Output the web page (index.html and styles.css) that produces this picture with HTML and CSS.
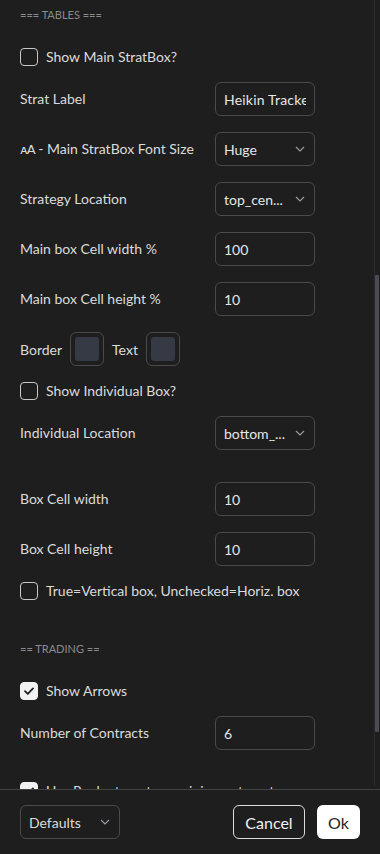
FILE: index.html
```html
<!DOCTYPE html>
<html>
<head>
<meta charset="utf-8">
<link rel="stylesheet" href="styles.css">
</head>
<body>
<div class="dialog">
  <div class="scroll">
    <div class="content">
      <div class="group-title first">=== TABLES ===</div>
      <label class="check-row"><span class="box"></span><span class="check-label">Show Main StratBox?</span></label>
      <div class="row"><span class="label">Strat Label</span><div class="input"><span class="val clip">Heikin Tracker</span></div></div>
      <div class="row"><span class="label"><span class="aa">ᴀA</span> - Main StratBox Font Size</span><div class="input select"><span class="val">Huge</span><svg class="chev" width="10" height="6" viewBox="0 0 10 6"><path d="M1 1l4 4 4-4" fill="none" stroke="#9a9ca3" stroke-width="1.1"/></svg></div></div>
      <div class="row"><span class="label">Strategy Location</span><div class="input select"><span class="val">top_cen...</span><svg class="chev" width="10" height="6" viewBox="0 0 10 6"><path d="M1 1l4 4 4-4" fill="none" stroke="#9a9ca3" stroke-width="1.1"/></svg></div></div>
      <div class="row"><span class="label">Main box Cell width %</span><div class="input">100</div></div>
      <div class="row"><span class="label">Main box Cell height %</span><div class="input">10</div></div>
      <div class="swatch-row"><span class="label-inline">Border</span><span class="swatch"><span class="swatch-fill"></span></span><span class="label-inline">Text</span><span class="swatch"><span class="swatch-fill"></span></span></div>
      <label class="check-row"><span class="box"></span><span class="check-label">Show Individual Box?</span></label>
      <div class="row"><span class="label">Individual Location</span><div class="input select"><span class="val">bottom_...</span><svg class="chev" width="10" height="6" viewBox="0 0 10 6"><path d="M1 1l4 4 4-4" fill="none" stroke="#9a9ca3" stroke-width="1.1"/></svg></div></div>
      <div class="row spaced"><span class="label">Box Cell width</span><div class="input">10</div></div>
      <div class="row"><span class="label">Box Cell height</span><div class="input">10</div></div>
      <label class="check-row"><span class="box"></span><span class="check-label">True=Vertical box, Unchecked=Horiz. box</span></label>
      <div class="group-title">== TRADING ==</div>
      <label class="check-row"><span class="box checked"><svg width="18" height="18" viewBox="0 0 18 18"><path d="M5 9.2l2.8 2.6 5.2-5.4" fill="none" stroke="#1e1e1e" stroke-width="1.8" stroke-linecap="round" stroke-linejoin="round"/></svg></span><span class="check-label">Show Arrows</span></label>
      <div class="row"><span class="label">Number of Contracts</span><div class="input">6</div></div>
      <label class="check-row spaced"><span class="box checked"><svg width="18" height="18" viewBox="0 0 18 18"><path d="M5 9.2l2.8 2.6 5.2-5.4" fill="none" stroke="#1e1e1e" stroke-width="1.8" stroke-linecap="round" stroke-linejoin="round"/></svg></span><span class="check-label">Use Renko targets as minimum target</span></label>
    </div>
    <div class="scrollbar"><div class="thumb"></div></div>
  </div>
  <div class="footer">
    <div class="input select defaults"><span class="val">Defaults</span><svg class="chev" width="10" height="6" viewBox="0 0 10 6"><path d="M1 1l4 4 4-4" fill="none" stroke="#9a9ca3" stroke-width="1.1"/></svg></div>
    <div class="buttons">
      <div class="btn cancel">Cancel</div>
      <div class="btn ok">Ok</div>
    </div>
  </div>
</div>
</body>
</html>
```
FILE: styles.css
```css
html, body {
  margin: 0;
  padding: 0;
  background: #1e1e1e;
}
body {
  font-family: "Trebuchet MS", Lato, "Liberation Sans", sans-serif;
  font-size: 14px;
  color: #dbdbdb;
}
.dialog {
  width: 380px;
  height: 854px;
  display: flex;
  flex-direction: column;
}
.scroll {
  height: 789px;
  overflow: hidden;
  display: flex;
}
.content {
  flex: 1;
  display: flex;
  flex-direction: column;
  gap: 16px;
  padding: 7px 0 0 20px;
}
.group-title {
  font-size: 11px;
  line-height: 16px;
  height: 16px;
  color: #8a8a8a;
  margin-top: 25px;
  margin-bottom: 9px;
}
.group-title.first {
  margin-top: 0;
}
.check-row {
  display: flex;
  align-items: center;
  gap: 8px;
  height: 18px;
  flex-shrink: 0;
}
.box {
  width: 18px;
  height: 18px;
  box-sizing: border-box;
  border: 1px solid #c8c8c8;
  border-radius: 4px;
  flex-shrink: 0;
  display: flex;
}
.box.checked {
  background: #f2f2f2;
  border-color: #f2f2f2;
}
.box.checked svg {
  margin: -1px;
}
.check-label {
  line-height: 18px;
  white-space: nowrap;
}
.row {
  display: grid;
  grid-template-columns: 195px 100px;
  align-items: center;
  height: 34px;
  flex-shrink: 0;
}
.spaced {
  margin-top: 16px;
}
.label {
  white-space: nowrap;
  margin-top: -1px;
}
.aa {
  font-family: "DejaVu Sans", sans-serif;
  font-size: 13px;
  letter-spacing: -1px;
}
.input {
  box-sizing: border-box;
  height: 34px;
  border: 1px solid #4a4a4a;
  border-radius: 6px;
  padding: 0 8px;
  display: flex;
  align-items: center;
  color: #e6e6e6;
  overflow: hidden;
  white-space: nowrap;
}
.val {
  overflow: hidden;
  min-width: 0;
}
.clip {
  flex: 1;
  letter-spacing: 0.2px;
}
.select {
  justify-content: space-between;
  padding-right: 9px;
}
.chev {
  flex-shrink: 0;
}
.swatch-row {
  display: flex;
  align-items: center;
  gap: 8px;
  height: 34px;
  flex-shrink: 0;
}
.swatch {
  box-sizing: border-box;
  width: 34px;
  height: 34px;
  border: 1px solid #4a4a4a;
  border-radius: 6px;
  padding: 4px;
  display: flex;
}
.swatch-fill {
  flex: 1;
  background: #363a45;
  border-radius: 3px;
}
.scrollbar {
  width: 5px;
  margin-right: 1px;
  border-left: 1px solid #2b2b2e;
  display: flex;
  flex-direction: column;
  padding-top: 275px;
  box-sizing: border-box;
  height: 786px;
}
.thumb {
  width: 4px;
  height: 457px;
  background: #4a4b55;
  border-radius: 1px;
}
.footer {
  border-top: 1px solid #434343;
  flex: 1;
  display: flex;
  align-items: center;
  justify-content: space-between;
  padding: 0 20px;
}
.defaults {
  width: 100px;
  color: #dbdbdb;
}
.buttons {
  display: flex;
  gap: 12px;
}
.btn {
  box-sizing: border-box;
  height: 34px;
  border-radius: 6px;
  display: flex;
  align-items: center;
  justify-content: center;
  font-size: 16px;
  padding: 0 11px;
}
.cancel {
  border: 1px solid #dcdcdc;
  color: #f0f0f0;
  width: 72px;
}
.ok {
  background: #ffffff;
  color: #1e1e1e;
  width: 43px;
}
```
